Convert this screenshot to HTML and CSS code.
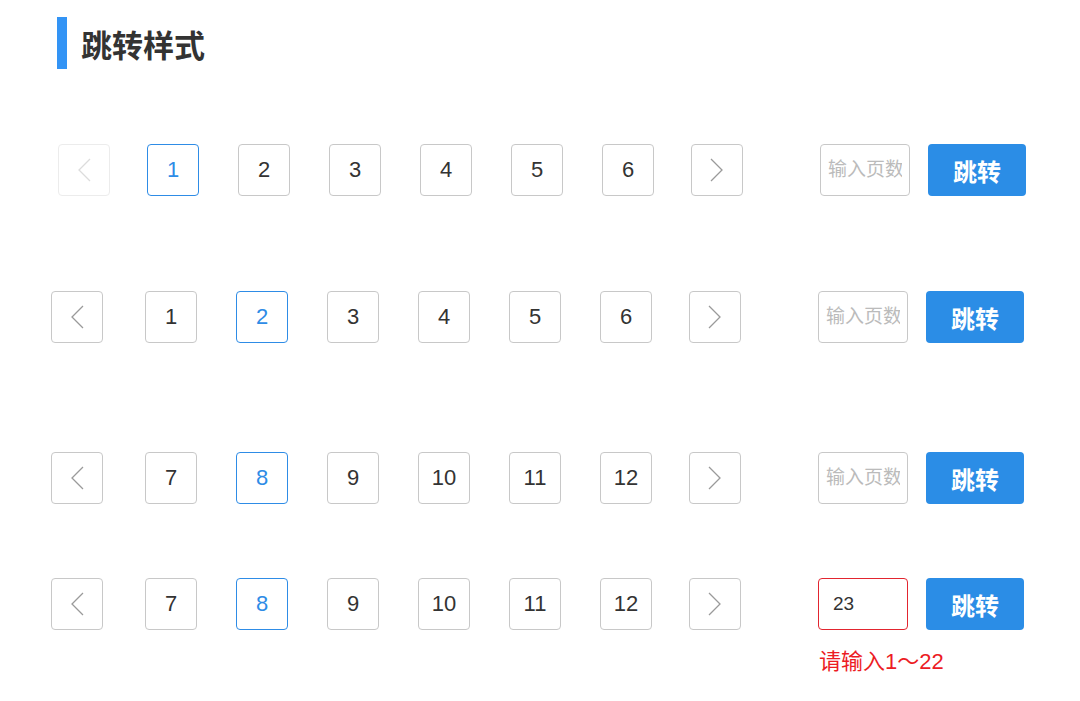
FILE: index.html
```html
<!DOCTYPE html>
<html lang="zh-CN">
<head>
  <meta charset="UTF-8">
  <title>跳转样式</title>
  <link rel="stylesheet" href="styles.css">
</head>
<body>

  <h2 class="title">跳转样式</h2>

  <div class="pager pager-first">
    <span class="box prev disabled">
      <svg width="14" height="24" viewBox="0 0 14 24"><polyline points="13,1 2,12 13,23" /></svg>
    </span>
    <span class="box page active">1</span>
    <span class="box page">2</span>
    <span class="box page">3</span>
    <span class="box page">4</span>
    <span class="box page">5</span>
    <span class="box page">6</span>
    <span class="box next">
      <svg width="14" height="24" viewBox="0 0 14 24"><polyline points="1,1 12,12 1,23" /></svg>
    </span>
    <input class="jump-input" type="text" placeholder="输入页数">
    <button class="jump-btn">跳转</button>
  </div>

  <div class="pager pager-second">
    <span class="box prev">
      <svg width="14" height="24" viewBox="0 0 14 24"><polyline points="13,1 2,12 13,23" /></svg>
    </span>
    <span class="box page">1</span>
    <span class="box page active">2</span>
    <span class="box page">3</span>
    <span class="box page">4</span>
    <span class="box page">5</span>
    <span class="box page">6</span>
    <span class="box next">
      <svg width="14" height="24" viewBox="0 0 14 24"><polyline points="1,1 12,12 1,23" /></svg>
    </span>
    <input class="jump-input" type="text" placeholder="输入页数">
    <button class="jump-btn">跳转</button>
  </div>

  <div class="pager pager-third">
    <span class="box prev">
      <svg width="14" height="24" viewBox="0 0 14 24"><polyline points="13,1 2,12 13,23" /></svg>
    </span>
    <span class="box page">7</span>
    <span class="box page active">8</span>
    <span class="box page">9</span>
    <span class="box page">10</span>
    <span class="box page">11</span>
    <span class="box page">12</span>
    <span class="box next">
      <svg width="14" height="24" viewBox="0 0 14 24"><polyline points="1,1 12,12 1,23" /></svg>
    </span>
    <input class="jump-input" type="text" placeholder="输入页数">
    <button class="jump-btn">跳转</button>
  </div>

  <div class="pager pager-fourth">
    <span class="box prev">
      <svg width="14" height="24" viewBox="0 0 14 24"><polyline points="13,1 2,12 13,23" /></svg>
    </span>
    <span class="box page">7</span>
    <span class="box page active">8</span>
    <span class="box page">9</span>
    <span class="box page">10</span>
    <span class="box page">11</span>
    <span class="box page">12</span>
    <span class="box next">
      <svg width="14" height="24" viewBox="0 0 14 24"><polyline points="1,1 12,12 1,23" /></svg>
    </span>
    <input class="jump-input error" type="text" value="23">
    <button class="jump-btn">跳转</button>
  </div>
  <p class="error-tip">请输入1～22</p>

</body>
</html>
```

FILE: styles.css
```css
body {
  margin: 0;
  font-family: "Liberation Sans", "Noto Sans CJK SC", sans-serif;
  background-color: #fff;
  color: #333;
}

.title {
  margin: 17px 0 0 57px;
  padding-left: 14px;
  border-left: 10px solid #3394f5;
  height: 52px;
  line-height: 54px;
  font-family: "Noto Sans CJK SC", sans-serif;
  font-size: 31px;
  font-weight: bold;
  color: #333;
}

.pager {
  display: flex;
  align-items: flex-start;
  height: 52px;
}

.pager-first {
  margin-top: 75px;
  padding-left: 58px;
}

.pager-second {
  margin-top: 95px;
  padding-left: 51px;
}

.pager-third {
  margin-top: 109px;
  padding-left: 51px;
}

.pager-fourth {
  margin-top: 74px;
  padding-left: 51px;
}

.box {
  box-sizing: border-box;
  width: 52px;
  height: 52px;
  border: 1px solid #c8c8c8;
  border-radius: 4px;
  display: flex;
  align-items: center;
  justify-content: center;
  font-size: 22px;
  color: #333;
}

.page {
  margin-left: 39px;
}

.pager-first .prev + .page {
  margin-left: 37px;
}

.pager-second .prev + .page,
.pager-third .prev + .page,
.pager-fourth .prev + .page {
  margin-left: 42px;
}

.page.active {
  border-color: #2e8ce6;
  color: #2e8ce6;
}

.box svg {
  fill: none;
  stroke: #9a9a9a;
  stroke-width: 1.3;
}

.prev.disabled {
  border-color: #ececec;
}

.prev.disabled svg {
  stroke: #dcdcdc;
}

.next {
  margin-left: 37px;
}

.jump-input {
  box-sizing: border-box;
  margin-left: 77px;
  width: 90px;
  height: 52px;
  padding: 0 7px;
  border: 1px solid #c8c8c8;
  border-radius: 4px;
  font-family: "Liberation Sans", "Noto Sans CJK SC", sans-serif;
  font-size: 19px;
  color: #333;
  outline: none;
}

.jump-input::placeholder {
  color: #bbb;
}

.jump-input.error {
  padding-left: 14px;
  border-color: #e2252f;
}

.error-tip {
  margin: 20px 0 0 819px;
  font-family: "Liberation Sans", "Noto Sans CJK SC", sans-serif;
  font-size: 22px;
  line-height: 24px;
  color: #ec1c24;
}

.jump-btn {
  margin-left: 18px;
  width: 98px;
  height: 52px;
  border: none;
  border-radius: 4px;
  background-color: #2b8de6;
  color: #fff;
  font-family: "Noto Sans CJK SC", sans-serif;
  font-size: 24px;
  font-weight: bold;
  cursor: pointer;
}
```
